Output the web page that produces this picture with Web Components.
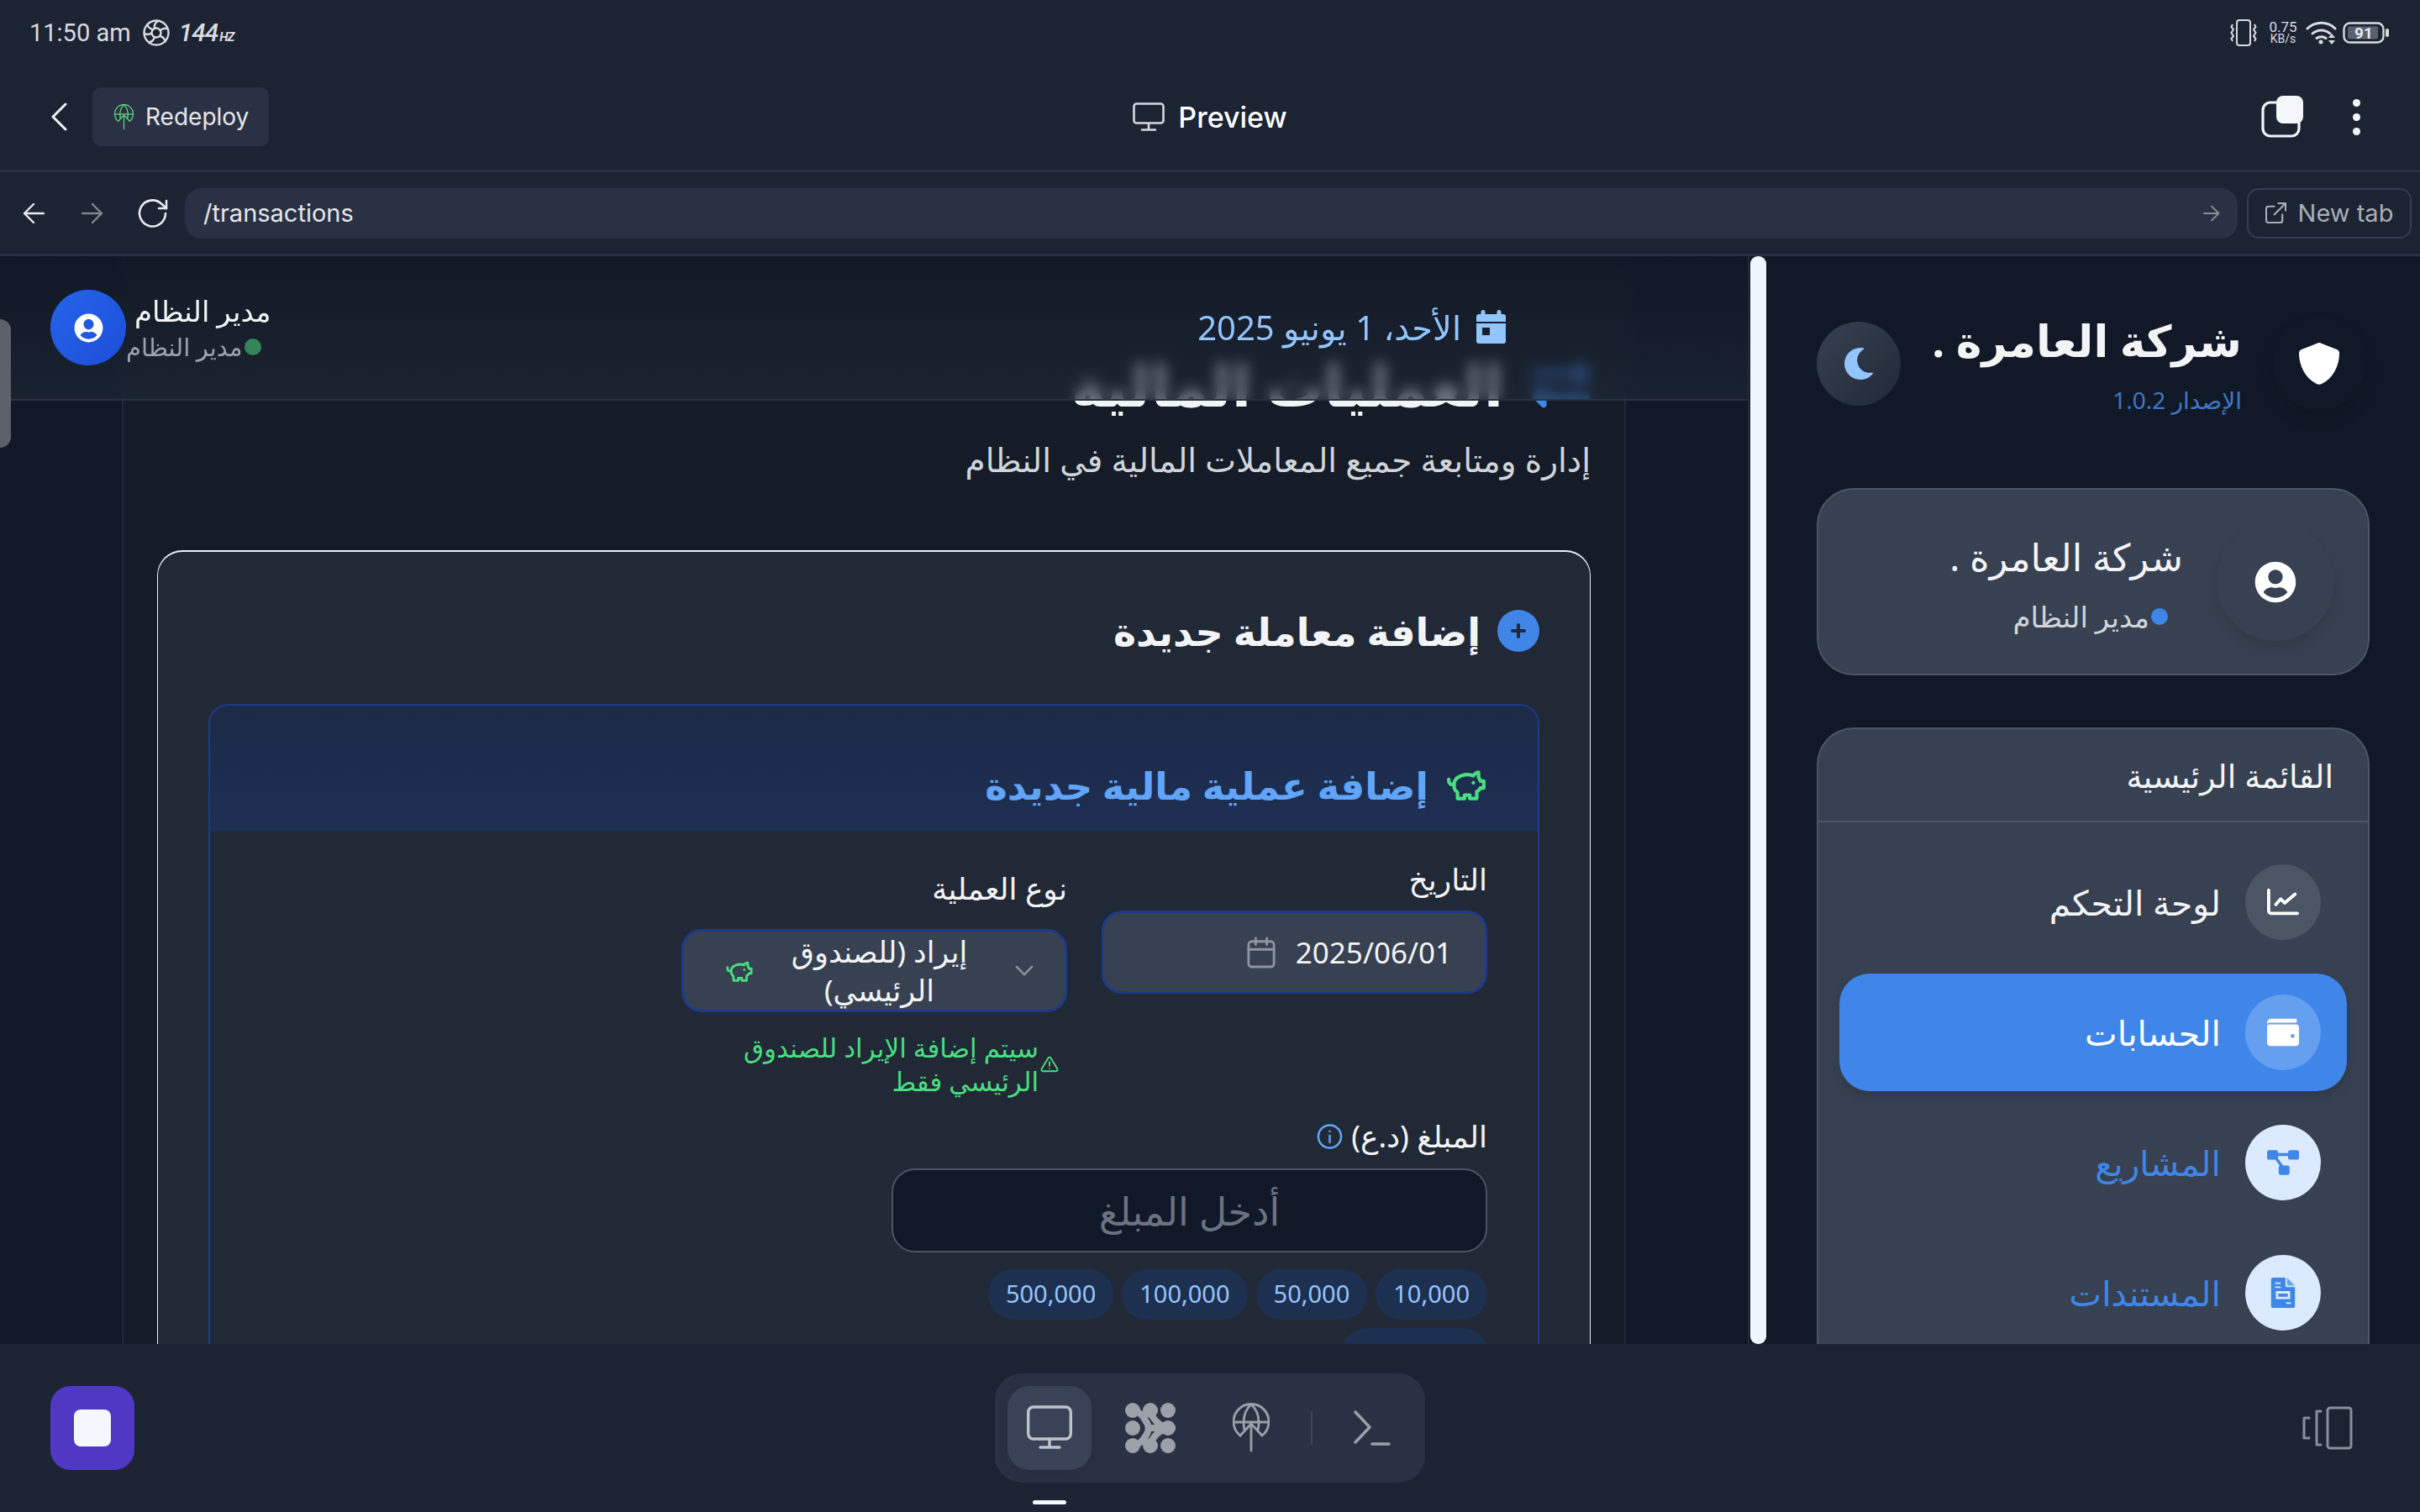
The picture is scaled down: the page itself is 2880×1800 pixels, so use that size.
<!DOCTYPE html>
<html lang="ar">
<head>
<meta charset="utf-8">
<title>Preview</title>
<style>
  html, body { margin: 0; height: 100%; background: #1c2333; }
  body { width: 2880px; height: 1800px; overflow: hidden; display: flex; flex-direction: column;
         font-family: "Noto Sans", "Open Sans", "DejaVu Sans", sans-serif; color: #fff; }
  .view { flex: 1; min-height: 0; display: flex; }
</style>
</head>
<body>
<status-bar></status-bar>
<top-bar></top-bar>
<url-bar></url-bar>
<div class="view">
  <main-view>
    <page-header></page-header>
    <page-intro></page-intro>
    <tx-card>
      <tx-form></tx-form>
    </tx-card>
  </main-view>
  <side-bar>
    <user-card></user-card>
    <nav-card>
      <nav-item icon="chart" tone="plain">لوحة التحكم</nav-item>
      <nav-item icon="wallet" tone="active">الحسابات</nav-item>
      <nav-item icon="diagram" tone="link">المشاريع</nav-item>
      <nav-item icon="file" tone="link">المستندات</nav-item>
    </nav-card>
  </side-bar>
</div>
<dock-bar></dock-bar>

<script>
// icones desenhados a mao, todos em svg inline
const ICONS = {
  back: `<svg viewBox="0 0 20 34" fill="none" stroke="currentColor" stroke-width="3" stroke-linecap="round" stroke-linejoin="round"><path d="M18 2 3 17l15 15"/></svg>`,
  arrowL: `<svg viewBox="0 0 26 26" fill="none" stroke="currentColor" stroke-width="2.4" stroke-linecap="round" stroke-linejoin="round"><path d="M25 13H2M13 2 2 13l11 11"/></svg>`,
  arrowR: `<svg viewBox="0 0 26 26" fill="none" stroke="currentColor" stroke-width="2.4" stroke-linecap="round" stroke-linejoin="round"><path d="M1 13h23M13 2l11 11-11 11"/></svg>`,
  reload: `<svg viewBox="0 0 36 34" fill="none" stroke="currentColor" stroke-width="2.6" stroke-linecap="round" stroke-linejoin="round"><path d="M33 17a15.5 15.5 0 1 1-5-11.5L34 11"/><path d="M34 2v9h-9"/></svg>`,
  globeUp: `<svg viewBox="0 0 44 58" fill="none" stroke="currentColor" stroke-width="2.4" stroke-linecap="round" stroke-linejoin="round"><path d="M9 38A21 21 0 1 1 35 38"/><path d="M1 22h42M22 1c-6 5-9 13-9 22 0 3 .4 6 1 8M22 1c6 5 9 13 9 22 0 3-.4 6-1 8"/><path d="M22 56V24M9 38l13-14 13 14"/></svg>`,
  monitor: `<svg viewBox="0 0 38 34" fill="none" stroke="currentColor" stroke-width="2.6" stroke-linecap="round" stroke-linejoin="round"><rect x="1.5" y="1.5" width="35" height="23" rx="3"/><path d="M19 25v7M11 32.5h16"/></svg>`,
  external: `<svg viewBox="0 0 26 26" fill="none" stroke="currentColor" stroke-width="2.2" stroke-linecap="round" stroke-linejoin="round"><path d="M21 15v7a3 3 0 0 1-3 3H4a3 3 0 0 1-3-3V8a3 3 0 0 1 3-3h7"/><path d="M16 1h9v9M25 1 11 15"/></svg>`,
  calSolid: `<svg viewBox="0 0 35 40"><path fill="currentColor" fill-rule="evenodd" d="M8 0a2.5 2.5 0 0 1 2.5 2.5V5h14V2.5a2.5 2.5 0 0 1 5 0V5H32a3 3 0 0 1 3 3v6H0V8a3 3 0 0 1 3-3h2.5V2.5A2.5 2.5 0 0 1 8 0zM0 16h35v21a3 3 0 0 1-3 3H3a3 3 0 0 1-3-3zm7 5v9h9v-9z"/></svg>`,
  exchange: `<svg viewBox="0 0 512 512"><path fill="currentColor" d="M0 168v-16c0-13.255 10.745-24 24-24h360V80c0-21.367 25.899-32.042 40.971-16.971l80 80c9.372 9.373 9.372 24.569 0 33.941l-80 80C409.956 271.982 384 261.456 384 240v-48H24c-13.255 0-24-10.745-24-24zm488 152H128v-48c0-21.314-25.862-32.08-40.971-16.971l-80 80c-9.372 9.373-9.372 24.569 0 33.941l80 80C102.057 463.997 128 453.437 128 432v-48h360c13.255 0 24-10.745 24-24v-16c0-13.255-10.745-24-24-24z"/></svg>`,
  userCircle: `<svg viewBox="0 0 496 512"><path fill="currentColor" d="M248 8C111 8 0 119 0 256s111 248 248 248 248-111 248-248S385 8 248 8zm0 96c48.6 0 88 39.4 88 88s-39.4 88-88 88-88-39.4-88-88 39.4-88 88-88zm0 344c-58.7 0-111.3-26.6-146.5-68.2 18.8-35.4 55.6-59.8 98.5-59.8 2.4 0 4.8.4 7.1 1.1 13 4.2 26.6 6.9 40.9 6.9 14.3 0 28-2.7 40.9-6.9 2.3-.7 4.7-1.1 7.1-1.1 42.9 0 79.7 24.4 98.5 59.8C359.3 421.4 306.7 448 248 448z"/></svg>`,
  moon: `<svg viewBox="0 0 512 512"><path fill="currentColor" d="M283.211 512c78.962 0 151.079-35.925 198.857-94.792 7.068-8.708-.639-21.43-11.562-19.35-124.203 23.654-238.262-71.576-238.262-196.954 0-72.222 38.662-138.635 101.498-174.394 9.686-5.512 7.25-20.197-3.756-22.23A258.156 258.156 0 0 0 283.211 0c-141.309 0-256 114.511-256 256 0 141.309 114.511 256 256 256z"/></svg>`,
  shield: `<svg viewBox="0 0 48 50"><path fill="currentColor" d="M24 0c1 0 2 .4 3 1l18 7c2 .8 3 2.4 3 4.5C48 27 41 42 27 49c-2 1-4 1-6 0C7 42 0 27 0 12.5 0 10.4 1 8.8 3 8l18-7c1-.6 2-1 3-1z"/></svg>`,
  chart: `<svg viewBox="0 0 40 34"><path fill="none" stroke="currentColor" stroke-width="4" stroke-linecap="round" stroke-linejoin="round" d="M2 2v26a3 3 0 0 0 3 3h33"/><path fill="none" stroke="currentColor" stroke-width="4" stroke-linecap="round" stroke-linejoin="round" d="M11 20l6-7 5 5 13-11"/></svg>`,
  wallet: `<svg viewBox="0 0 40 34"><path fill="currentColor" fill-rule="evenodd" d="M5 0h30a2.5 2.5 0 0 1 0 5H3a3 3 0 0 0-3 2V5a5 5 0 0 1 5-5zM4 7h32a4 4 0 0 1 4 4v19a4 4 0 0 1-4 4H4a4 4 0 0 1-4-4V8c1-.6 2.5-1 4-1zm28 12a2.5 2.5 0 1 0 0 5 2.5 2.5 0 0 0 0-5z"/></svg>`,
  diagram: `<svg viewBox="0 0 44 34"><g fill="currentColor"><rect x="0" y="0" width="15" height="13" rx="3"/><rect x="29" y="0" width="15" height="13" rx="3"/><rect x="16" y="21" width="15" height="13" rx="3"/></g><path fill="none" stroke="currentColor" stroke-width="4" d="M10 6h24M10 8l12 16"/></svg>`,
  file: `<svg viewBox="0 0 30 38"><path fill="currentColor" fill-rule="evenodd" d="M3 0h15v9a3 3 0 0 0 3 3h9v23a3 3 0 0 1-3 3H3a3 3 0 0 1-3-3V3a3 3 0 0 1 3-3zm2 6v2h7V6zm0 5v2h7v-2zm1 6v10h18V17zm3 3h12v4H9zm10 11v2h6v-2z"/><path fill="currentColor" opacity=".7" d="M20 0l10 10h-8a2 2 0 0 1-2-2z"/></svg>`,
  pig: `<svg viewBox="0 0 24 24" fill="none" stroke="currentColor" stroke-width="2" stroke-linecap="round" stroke-linejoin="round"><path d="M19 5c-1.5 0-2.8 1.4-3 2-3.5-1.5-11-.3-11 5 0 1.8 0 3 2 4.5V20h4v-2h3v2h4v-4c1-.5 1.7-1 2-2h2v-4h-2c0-1-.5-1.5-1-2V5z"/><path d="M2 9v1c0 1.1.9 2 2 2h1"/><path d="M16 11h.01"/></svg>`,
  calendar: `<svg viewBox="0 0 36 40" fill="none" stroke="currentColor" stroke-width="3" stroke-linecap="round" stroke-linejoin="round"><rect x="2" y="6" width="32" height="32" rx="4"/><path d="M11 2v8M25 2v8M2 16h32"/></svg>`,
  chevron: `<svg viewBox="0 0 24 16" fill="none" stroke="currentColor" stroke-width="2.6" stroke-linecap="round" stroke-linejoin="round"><path d="M2 3l10 10L22 3"/></svg>`,
  warn: `<svg viewBox="0 0 24 24" fill="none" stroke="currentColor" stroke-width="2" stroke-linecap="round" stroke-linejoin="round"><path d="M10.3 3.9 1.8 18a2 2 0 0 0 1.7 3h17a2 2 0 0 0 1.7-3L13.7 3.9a2 2 0 0 0-3.4 0z"/><path d="M12 9v5M12 17.5h.01"/></svg>`,
  info: `<svg viewBox="0 0 32 32" fill="none" stroke="currentColor" stroke-width="2.6" stroke-linecap="round"><circle cx="16" cy="16" r="14"/><path d="M16 15v8M16 9.5h.01"/></svg>`,
};

function ic(nome) {
  return ICONS[nome] || "";
}

class StatusBar extends HTMLElement {
  constructor() {
    super();
    this.attachShadow({ mode: "open" });
  }
  connectedCallback() {
    this.shadowRoot.innerHTML = `
      <style>
        :host { display: flex; justify-content: space-between; align-items: center; height: 80px;
                box-sizing: border-box; padding: 0 37px 3px 35px; color: #d9dbe0;
                font-family: Roboto, sans-serif; }
        .left, .right { display: flex; align-items: center; }
        .time { font-size: 29px; }
        .spin { width: 32px; height: 32px; margin-left: 14px; }
        .hz { font-size: 30px; font-style: italic; font-weight: 500; margin-left: 11px; letter-spacing: -1px; }
        .hz small { font-size: 15px; font-weight: 700; margin-left: 2px; }
        .vib { width: 32px; height: 32px; }
        .net { margin-left: 13px; width: 36px; text-align: center; line-height: 14px; font-size: 16px; }
        .net b { display: block; font-weight: 400; font-size: 17px; }
        .net span { font-size: 14px; }
        .wifi { width: 37px; height: 28px; margin-left: 9px; }
        .bat { margin-left: 7px; width: 55px; height: 26px; }
      </style>
      <div class="left">
        <span class="time">11:50 am</span>
        <svg class="spin" viewBox="0 0 32 32" fill="none" stroke="currentColor" stroke-width="2.4"><circle cx="16" cy="16" r="14.5"/><circle cx="16" cy="16" r="5.5"/><path d="M14 10.8C13 7 15 3 19 1.8M21 13c3-2.5 6.5-3 9.5-1M20.5 20c3.5 1 6 4 6 7.5M14 21.2c-1 3.5-4 6-7.5 6.5M10.8 16c-3 2.5-7 2.5-9.3.5M11.5 12C8 11 5.500 8 5.300 5"/></svg>
        <span class="hz">144<small>HZ</small></span>
      </div>
      <div class="right">
        <svg class="vib" viewBox="0 0 32 32" fill="none" stroke="currentColor" stroke-width="2"><rect x="8" y="1" width="16" height="30" rx="3"/><path d="M3 6 1.5 9 4 12 1.5 16 4 20 1.5 23 3 26M29 6l1.5 3L28 12l2.5 4L28 20l2.5 3L29 26"/></svg>
        <div class="net"><b>0.75</b><span>KB/s</span></div>
        <svg class="wifi" viewBox="0 0 37 28" fill="none" stroke="currentColor" stroke-width="3" stroke-linecap="round"><path d="M2 9c9.5-9 24-9 33 0M8 15c6-5.5 15-5.5 21 0M13 20.5c3-2.5 8-2.5 11 0"/><circle cx="18" cy="25" r="2.5" fill="currentColor" stroke="none"/><path d="M31 15l4 5h-8zM27 23h8l-4 5z" fill="currentColor" stroke="none"/></svg>
        <svg class="bat" viewBox="0 0 55 26"><rect x="1.5" y="1.5" width="47" height="23" rx="7" fill="none" stroke="currentColor" stroke-width="2.4"/><rect x="6" y="5.5" width="36" height="15" rx="2" fill="#5a6070"/><rect x="51" y="8" width="4" height="10" rx="2" fill="currentColor"/><text x="25" y="20" text-anchor="middle" font-family="Roboto, sans-serif" font-size="19" font-weight="700" fill="#e8e9ec">91</text></svg>
      </div>`;
  }
}

class TopBar extends HTMLElement {
  constructor() {
    super();
    this.attachShadow({ mode: "open" });
  }
  connectedCallback() {
    this.shadowRoot.innerHTML = `
      <style>
        :host { display: grid; grid-template-columns: 1fr auto 1fr; align-items: center; height: 125px;
                box-sizing: border-box; border-bottom: 3px solid #2b3144; padding-bottom: 4px;
                font-family: Inter, Roboto, sans-serif; color: #fff; }
        .left { display: flex; align-items: center; padding-left: 60px; }
        .back { width: 20px; height: 34px; color: #eef0f3; display: flex; }
        .deploy { margin-left: 30px; height: 70px; width: 210px; box-sizing: border-box; background: #2b3144;
                  border-radius: 10px; display: flex; align-items: center; padding-left: 26px; gap: 14px;
                  font-size: 28px; color: #e5e7eb; }
        .deploy svg { width: 23px; height: 31px; color: #5fd97f; }
        .title { display: flex; align-items: center; gap: 16px; font-size: 34px; font-weight: 500; }
        .title svg { width: 38px; height: 34px; color: #d6d8dd; }
        .right { justify-self: end; display: flex; align-items: center; padding-right: 70px; }
        .copy { width: 50px; height: 50px; }
        .dots { margin-left: 59px; width: 10px; display: flex; flex-direction: column; gap: 8px; }
        .dots i { width: 9px; height: 9px; border-radius: 50%; background: #f3f7fc; }
      </style>
      <div class="left">
        <span class="back">${ic("back")}</span>
        <div class="deploy">${ic("globeUp")}<span>Redeploy</span></div>
      </div>
      <div class="title">${ic("monitor")}<span>Preview</span></div>
      <div class="right">
        <svg class="copy" viewBox="0 0 50 50"><rect x="2" y="8" width="43" height="40" rx="9" fill="none" stroke="#f3f7fc" stroke-width="3.2"/><rect x="18" y="0" width="32" height="33" rx="8" fill="#f3f7fc"/></svg>
        <div class="dots"><i></i><i></i><i></i></div>
      </div>`;
  }
}

class UrlBar extends HTMLElement {
  constructor() {
    super();
    this.attachShadow({ mode: "open" });
  }
  connectedCallback() {
    this.shadowRoot.innerHTML = `
      <style>
        :host { display: flex; align-items: center; height: 100px; box-sizing: border-box;
                border-bottom: 3px solid #2b3144; padding: 0 10px 0 27px;
                font-family: Inter, Roboto, sans-serif; }
        .nav { width: 26px; height: 26px; color: #e8eaee; flex: none; display: flex; }
        .nav.off { color: #80858f; margin-left: 44px; }
        .nav.re { width: 36px; height: 34px; margin-left: 41px; }
        .field { flex: 1; margin-left: 20px; height: 60px; background: #2b3144; border-radius: 20px;
                 display: flex; align-items: center; justify-content: space-between; padding: 0 21px 0 22px;
                 font-size: 29px; color: #e5e7eb; }
        .field svg { width: 20px; height: 20px; color: #8a8f99; }
        .tab { margin-left: 11px; height: 60px; width: 196px; box-sizing: border-box; border: 2px solid #343c50;
               border-radius: 14px; display: flex; align-items: center; justify-content: center; gap: 14px;
               font-size: 29px; color: #a9aeb8; }
        .tab svg { width: 25px; height: 25px; }
      </style>
      <span class="nav">${ic("arrowL")}</span>
      <span class="nav off">${ic("arrowR")}</span>
      <span class="nav re">${ic("reload")}</span>
      <div class="field"><span>/transactions</span>${ic("arrowR")}</div>
      <div class="tab">${ic("external")}<span>New tab</span></div>`;
  }
}

class MainView extends HTMLElement {
  constructor() {
    super();
    this.attachShadow({ mode: "open" });
  }
  connectedCallback() {
    this.shadowRoot.innerHTML = `
      <style>
        :host { display: block; position: relative; flex: none; width: 2080px; overflow: hidden;
                background: #111827; border-right: 2px solid #1f2937; }
        .handle { position: absolute; left: 0; top: 75px; width: 13px; height: 153px; background: #5b606b;
                  border-radius: 0 14px 14px 0; z-index: 5; }
        .container { margin-left: 145px; width: 1790px; height: 100%; box-sizing: border-box;
                     background: #151c28; border: solid #1f2937; border-width: 0 2px;
                     padding: 115px 40px 0; }
      </style>
      <div class="handle"></div>
      <slot name="header"></slot>
      <div class="container"><slot></slot></div>`;
    this.querySelector("page-header").slot = "header";
  }
}

class PageHeader extends HTMLElement {
  constructor() {
    super();
    this.attachShadow({ mode: "open" });
  }
  connectedCallback() {
    this.shadowRoot.innerHTML = `
      <style>
        :host { display: flex; justify-content: space-between; align-items: center; position: absolute;
                left: 0; right: 0; top: 0; height: 172px; box-sizing: border-box; z-index: 3;
                padding: 0 288px 0 60px; border-bottom: 2px solid #2a3240;
                background: linear-gradient(180deg, rgba(17,24,39,.6), rgba(31,41,55,.62));
                -webkit-backdrop-filter: blur(8px); backdrop-filter: blur(8px); }
        .user { display: flex; align-items: center; gap: 10px; }
        .avatar { width: 90px; height: 90px; border-radius: 50%; background: linear-gradient(135deg, #2563eb, #1d4ed8);
                  display: flex; align-items: center; justify-content: center; color: #fff; }
        .avatar svg { width: 35px; height: 35px; }
        .who { display: flex; flex-direction: column; align-items: flex-start; }
        .name { font-size: 34px; line-height: 46px; color: #f3f4f6; }
        .role { display: flex; align-items: center; gap: 2px; font-size: 29px; line-height: 40px; color: #9ca3af; margin-left: -10px; }
        .role i { width: 20px; height: 20px; border-radius: 50%; background: #34855a; }
        .date { display: flex; align-items: center; gap: 18px; color: #93c5fd; font-size: 40px; direction: rtl; margin-top: -2px; }
        .date svg { width: 35px; height: 40px; }
      </style>
      <div class="user">
        <div class="avatar">${ic("userCircle")}</div>
        <div class="who">
          <span class="name">مدير النظام</span>
          <span class="role" dir="ltr"><span>مدير النظام</span><i></i></span>
        </div>
      </div>
      <div class="date">${ic("calSolid")}<span>الأحد، 1 يونيو 2025</span></div>`;
  }
}

class PageIntro extends HTMLElement {
  constructor() {
    super();
    this.attachShadow({ mode: "open" });
  }
  connectedCallback() {
    this.shadowRoot.innerHTML = `
      <style>
        :host { display: block; direction: rtl; }
        h1 { margin: 0; display: flex; align-items: center; gap: 34px; font-size: 68px; line-height: 76px;
             font-weight: 700; color: #f3f4f6; height: 102px; box-sizing: border-box; padding-bottom: 26px; }
        h1 svg { width: 70px; height: 70px; color: #3f86e8; }
        p { margin: 0; font-size: 39px; line-height: 50px; color: #d1d5db; }
      </style>
      <h1>${ic("exchange")}<span>العمليات المالية</span></h1>
      <p>إدارة ومتابعة جميع المعاملات المالية في النظام</p>`;
  }
}

class TxCard extends HTMLElement {
  constructor() {
    super();
    this.attachShadow({ mode: "open" });
  }
  connectedCallback() {
    this.shadowRoot.innerHTML = `
      <style>
        :host { display: block; margin-top: 83px; direction: rtl; background: #212936; border-radius: 30px;
                border: 2px solid #e6efff; border-width: 2px 1px 0; padding: 69px 60px 0; height: 1200px;
                box-sizing: border-box; }
        h2 { margin: 0 0 62px; display: flex; align-items: center; gap: 20px; font-size: 46px; font-weight: 700;
             height: 50px; color: #f3f4f6; }
        .plus { width: 50px; height: 50px; border-radius: 50%; background: #3f86e8; position: relative; flex: none; }
        .plus::before, .plus::after { content: ""; position: absolute; background: #212936; border-radius: 2px; }
        .plus::before { left: 16px; right: 16px; top: 23px; height: 4px; }
        .plus::after { top: 16px; bottom: 16px; left: 23px; width: 4px; }
      </style>
      <h2><span class="plus"></span><span>إضافة معاملة جديدة</span></h2>
      <slot></slot>`;
  }
}

class TxForm extends HTMLElement {
  constructor() {
    super();
    this.attachShadow({ mode: "open" });
  }
  connectedCallback() {
    this.shadowRoot.innerHTML = `
      <style>
        :host { display: block; border: 2px solid #1e3a8a; border-radius: 24px; overflow: hidden; }
        .head { height: 150px; box-sizing: border-box; background: linear-gradient(180deg, #1c2a47, #1e2f54);
                display: flex; align-items: center; gap: 20px; padding: 40px 60px 0 0; font-size: 45px;
                font-weight: 700; color: #60a5fa; border-bottom: 2px solid #1e2d4d; }
        .head svg { width: 50px; height: 50px; color: #4ade80; flex: none; }
        .body { padding: 35px 60px 0; color: #f3f4f6; font-size: 36px; }
        .row { display: flex; gap: 41px; align-items: flex-start; }
        .col { width: 459px; }
        label { display: block; height: 44px; line-height: 44px; }
        .input { box-sizing: border-box; border: 3px solid #1e3a8a; background: #374151; border-radius: 24px; }
        .date { margin-top: 15px; height: 99px; display: flex; align-items: center; gap: 24px; padding-right: 39px;
                font-size: 35px; direction: ltr; justify-content: flex-end; }
        .date svg { width: 34px; height: 38px; color: #8f95a0; }
        .sel { margin-top: 26px; height: 99px; display: flex; align-items: center; padding: 0 27px 0 49px; }
        .sel .chev { width: 22px; height: 15px; color: #8f95a0; margin: 0 10px 0 12px; flex: none; display: flex; }
        .sel .txt { flex: 1; text-align: center; font-size: 35px; line-height: 46px; padding: 0 16px; }
        .sel .pig { width: 34px; height: 38px; color: #4ade80; flex: none; display: flex; }
        .note { margin-top: 22px; display: flex; gap: 2px; padding-right: 10px; color: #4ade80; font-size: 31px;
                line-height: 40px; align-items: center; }
        .note svg { width: 22px; height: 22px; flex: none; }
        .amount { margin-top: 24px; width: 709px; }
        .amount label { display: flex; align-items: center; gap: 10px; }
        .amount label svg { width: 31px; height: 32px; color: #60a5fa; }
        .value { margin-top: 16px; height: 100px; box-sizing: border-box; background: #111827; border: 2px solid #4b5563;
                 border-radius: 28px; display: flex; align-items: center; justify-content: center; font-size: 46px;
                 color: #6b7280; }
        .chips { display: flex; flex-wrap: wrap; gap: 10px; margin-top: 20px; }
        .chips span { height: 60px; line-height: 58px; padding: 0 21px; border-radius: 30px; background: #1e3050;
                      color: #93c5fd; font-size: 29px; }
      </style>
      <div class="head">${ic("pig")}<span>إضافة عملية مالية جديدة</span></div>
      <div class="body">
        <div class="row">
          <div class="col">
            <label>التاريخ</label>
            <div class="input date">${ic("calendar")}<span>2025/06/01</span></div>
          </div>
          <div class="col" style="margin-top:11px">
            <label>نوع العملية</label>
            <div class="input sel">
              <span class="chev">${ic("chevron")}</span>
              <span class="txt">إيراد (للصندوق الرئيسي)</span>
              <span class="pig">${ic("pig")}</span>
            </div>
            <div class="note">${ic("warn")}<span>سيتم إضافة الإيراد للصندوق الرئيسي فقط</span></div>
          </div>
        </div>
        <div class="amount">
          <label><span>المبلغ (د.ع)</span>${ic("info")}</label>
          <div class="value">أدخل المبلغ</div>
          <div class="chips"><span>10,000</span><span>50,000</span><span>100,000</span><span>500,000</span><span>1,000,000</span></div>
        </div>
      </div>`;
  }
}

class SideBar extends HTMLElement {
  constructor() {
    super();
    this.attachShadow({ mode: "open" });
  }
  connectedCallback() {
    this.shadowRoot.innerHTML = `
      <style>
        :host { display: block; flex: 1; position: relative; overflow: hidden; background: #111827; direction: rtl;
                box-sizing: border-box; padding: 78px 60px 0 80px; }
        .thumb { position: absolute; left: 1px; top: 0; bottom: 0; width: 19px; background: #f0f6ff; border-radius: 9px; }
        .brand { display: flex; align-items: center; height: 100px; margin-bottom: 98px; }
        .shield { width: 110px; height: 110px; flex: none; margin-right: 5px; margin-left: 37px; border-radius: 50%;
                  display: flex; align-items: center; justify-content: center; color: #fff;
                  box-shadow: 0 10px 20px rgba(0,0,0,.12); }
        .shield svg { width: 48px; height: 50px; }
        .txt { flex: 1; }
        .txt b { display: block; font-size: 52px; line-height: 86px; color: #f3f4f6; }
        .txt span { display: block; font-size: 28px; line-height: 56px; color: #3f78c2; }
        .moon { width: 100px; height: 100px; border-radius: 50%; background: linear-gradient(135deg, #374151, #1f2937);
                display: flex; align-items: center; justify-content: center; color: #93c5fd; flex: none; }
        .moon svg { width: 38px; height: 40px; }
      </style>
      <div class="thumb"></div>
      <div class="brand">
        <span class="shield">${ic("shield")}</span>
        <div class="txt"><b>شركة العامرة .</b><span>الإصدار 1.0.2</span></div>
        <span class="moon">${ic("moon")}</span>
      </div>
      <slot></slot>`;
  }
}

class UserCard extends HTMLElement {
  constructor() {
    super();
    this.attachShadow({ mode: "open" });
  }
  connectedCallback() {
    this.shadowRoot.innerHTML = `
      <style>
        :host { display: flex; align-items: center; height: 223px; box-sizing: border-box; background: #374151;
                border: 2px solid #4b5563; border-radius: 44px; padding-right: 40px; gap: 40px; margin-bottom: 62px; }
        .av { width: 140px; height: 140px; border-radius: 50%; display: flex; align-items: center; justify-content: center;
              color: #fff; background: #374151; box-shadow: 0 8px 16px rgba(0,0,0,.12); flex: none; }
        .av svg { width: 50px; height: 50px; }
        b { display: block; font-weight: 400; font-size: 45px; line-height: 82px; color: #f3f4f6; }
        .role { display: flex; align-items: center; gap: 2px; font-size: 34px; line-height: 60px; color: #d1d5db; padding-right: 18px; }
        .role i { width: 20px; height: 20px; border-radius: 50%; background: #3f86e8; }
      </style>
      <div class="av">${ic("userCircle")}</div>
      <div><b>شركة العامرة .</b><div class="role"><i></i><span>مدير النظام</span></div></div>`;
  }
}

class NavCard extends HTMLElement {
  constructor() {
    super();
    this.attachShadow({ mode: "open" });
  }
  connectedCallback() {
    this.shadowRoot.innerHTML = `
      <style>
        :host { display: block; background: #374151; border: 2px solid #4b5563; border-bottom: 0; border-radius: 44px 44px 0 0;
                height: 900px; box-sizing: border-box; }
        .head { height: 111px; box-sizing: border-box; border-bottom: 2px solid #4b5563; display: flex; align-items: center;
                padding-right: 41px; font-size: 38px; color: #f3f4f6; }
        .list { padding: 25px 25px 0; display: flex; flex-direction: column; gap: 15px; }
      </style>
      <div class="head">القائمة الرئيسية</div>
      <div class="list"><slot></slot></div>`;
  }
}

class NavItem extends HTMLElement {
  constructor() {
    super();
    this.attachShadow({ mode: "open" });
  }
  connectedCallback() {
    const tone = this.getAttribute("tone") || "plain";
    const cores = {
      plain: { bg: "transparent", fg: "#f3f4f6", dot: "#4b5563", ic: "#fff" },
      active: { bg: "#3f86e8", fg: "#fff", dot: "#659ff0", ic: "#fff" },
      link: { bg: "transparent", fg: "#3f86e8", dot: "#dbeafe", ic: "#3f86e8" },
    }[tone];
    this.shadowRoot.innerHTML = `
      <style>
        :host { display: flex; align-items: center; height: 140px; box-sizing: border-box; border-radius: 36px;
                padding-right: 31px; gap: 29px; font-size: 41px; background: ${cores.bg}; color: ${cores.fg};
                ${tone === "active" ? "box-shadow: 0 6px 14px rgba(0,0,0,.14);" : ""} }
        .dot { width: 90px; height: 90px; border-radius: 50%; background: ${cores.dot}; color: ${cores.ic};
               display: flex; align-items: center; justify-content: center; flex: none; }
        svg { width: 38px; height: 36px; }
      </style>
      <span class="dot">${ic(this.getAttribute("icon"))}</span>
      <slot></slot>`;
  }
}

class DockBar extends HTMLElement {
  constructor() {
    super();
    this.attachShadow({ mode: "open" });
  }
  connectedCallback() {
    this.shadowRoot.innerHTML = `
      <style>
        :host { display: grid; grid-template-columns: 1fr auto 1fr; align-items: center; height: 200px; flex: none;
                box-sizing: border-box; padding: 0 60px; background: #1c2333; position: relative; }
        .stop { width: 100px; height: 100px; border-radius: 24px; background: #5038c4; display: flex; align-items: center; justify-content: center; }
        .stop i { width: 44px; height: 44px; background: #f5f7ff; border-radius: 8px; }
        .pill { display: flex; align-items: center; height: 130px; width: 512px; box-sizing: border-box; background: #2b3144;
                border-radius: 32px; padding-left: 15px; color: #9ca0a8; }
        .tab { width: 100px; height: 100px; display: flex; align-items: center; justify-content: center; border-radius: 26px; }
        .tab.on { background: #3a4258; color: #bfc3ca; box-shadow: 0 4px 14px rgba(0,0,0,.08); }
        .sep { width: 2px; height: 40px; background: #3e4659; margin: 0 0 0 21px; }
        .tab + .tab { margin-left: 20px; }
        .tab svg { display: block; }
        .home { position: absolute; left: 1229px; top: 186px; width: 40px; height: 5px; border-radius: 3px; background: #f3f7fc; }
        .side { justify-self: end; width: 60px; height: 52px; color: #8a8f99; margin-right: 20px; }
      </style>
      <div class="stop"><i></i></div>
      <div class="pill">
        <div class="tab on"><svg width="54" height="54" viewBox="0 0 54 54" fill="none" stroke="currentColor" stroke-width="3.4" stroke-linecap="round" stroke-linejoin="round"><rect x="1.7" y="2" width="50.6" height="38" rx="6"/><path d="M27 40v9M16 50h23"/></svg></div>
        <div class="tab"><svg width="60" height="60" viewBox="0 0 60 60" fill="#9ca0a8"><circle cx="9" cy="9" r="9"/><circle cx="30" cy="9" r="9"/><circle cx="51" cy="9" r="9"/><circle cx="9" cy="30" r="9"/><circle cx="51" cy="30" r="9"/><circle cx="9" cy="51" r="9"/><circle cx="30" cy="51" r="9"/><circle cx="51" cy="51" r="9"/><path fill="none" stroke="#9ca0a8" stroke-width="8" stroke-linecap="round" d="M9 9C20 11 22 18 26 24C28 28 28 33 26 37C22 43 20 49 9 51M30 9C32 18 38 26 51 30C38 34 32 42 30 51M30 30H51"/></svg></div>
        <div class="tab"><svg width="44" height="66" viewBox="0 0 44 58" fill="none" stroke="currentColor" stroke-width="2.8" stroke-linecap="round" stroke-linejoin="round"><path d="M9 38A21 21 0 1 1 35 38"/><path d="M1 22h42M22 1c-6 5-9 13-9 22 0 3 .4 6 1 8M22 1c6 5 9 13 9 22 0 3-.4 6-1 8"/><path d="M22 56V24M9 38l13-14 13 14"/></svg></div>
        <span class="sep"></span>
        <svg style="margin-left:49px" width="44" height="42" viewBox="0 0 44 42" fill="none" stroke="currentColor" stroke-width="3.4" stroke-linecap="round" stroke-linejoin="round"><path d="M2 2l17 18L2 38M22 40h20"/></svg>
      </div>
      <svg class="side" viewBox="0 0 60 52" fill="none" stroke="currentColor" stroke-width="3" stroke-linecap="round" stroke-linejoin="round"><rect x="30" y="2" width="28" height="48" rx="3"/><path d="M22 6h-5v40h5M8 14H2v24h6"/></svg>
      <div class="home"></div>`;
  }
}

customElements.define("status-bar", StatusBar);
customElements.define("top-bar", TopBar);
customElements.define("url-bar", UrlBar);
customElements.define("main-view", MainView);
customElements.define("page-header", PageHeader);
customElements.define("page-intro", PageIntro);
customElements.define("tx-card", TxCard);
customElements.define("tx-form", TxForm);
customElements.define("side-bar", SideBar);
customElements.define("user-card", UserCard);
customElements.define("nav-card", NavCard);
customElements.define("nav-item", NavItem);
customElements.define("dock-bar", DockBar);
</script>
</body>
</html>
